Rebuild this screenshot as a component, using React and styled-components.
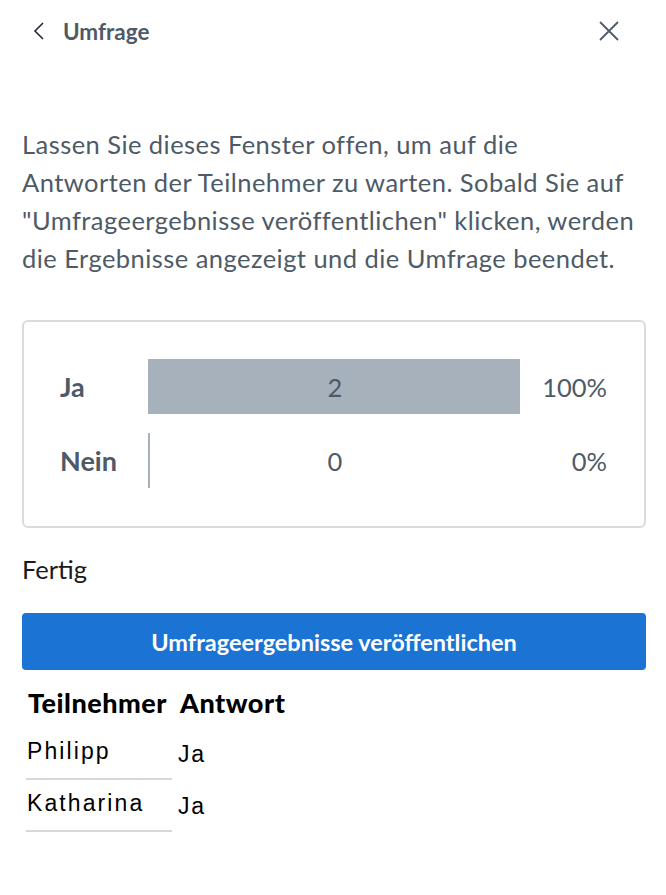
import React from "react";
import styled, { createGlobalStyle } from "styled-components";

const GlobalStyle = createGlobalStyle`
  body {
    margin: 0;
    background: #ffffff;
    font-family: "Lato", "Noto Sans", sans-serif;
    color: #4e5a66;
  }
`;

const Panel = styled.div`
  box-sizing: border-box;
  width: 666px;
  min-height: 895px;
  padding: 0 20px 0 22px;
`;

const Header = styled.div`
  display: flex;
  align-items: center;
  height: 62px;
`;

const BackButton = styled.button`
  display: flex;
  align-items: center;
  gap: 17px;
  border: none;
  background: none;
  padding: 0 0 0 10px;
  font-family: inherit;
  font-size: 22.5px;
  font-weight: 700;
  color: #4e5a66;
`;

const CloseButton = styled.button`
  margin-left: auto;
  margin-right: 26px;
  display: flex;
  border: none;
  background: none;
  padding: 0;
`;

const Intro = styled.p`
  margin: 63px 0 0;
  font-size: 25.5px;
  line-height: 38px;
  letter-spacing: 0.45px;
  white-space: nowrap;
  color: #4e5a66;
`;

const ResultCard = styled.div`
  margin-top: 43px;
  border: 2px solid #d8dce1;
  border-radius: 6px;
  padding: 37px 37px 38px 36px;
  display: flex;
  flex-direction: column;
  gap: 19px;
`;

const ResultRow = styled.div`
  display: grid;
  grid-template-columns: 88px 372px 1fr;
  align-items: center;
  height: 55px;
`;

const OptionLabel = styled.div`
  font-size: 27px;
  font-weight: 700;
  color: #4e5a66;
`;

const BarTrack = styled.div`
  position: relative;
  height: 100%;
  display: flex;
  align-items: center;
  justify-content: center;
  border-left: 2px solid #a7b1bb;
  box-sizing: border-box;
`;

const BarFill = styled.div`
  position: absolute;
  left: -2px;
  top: 0;
  bottom: 0;
  background: #a7b1bb;
`;

const Count = styled.span`
  position: relative;
  font-size: 25.5px;
  color: #4e5a66;
`;

const Percent = styled.div`
  text-align: right;
  font-size: 25.5px;
  color: #4e5a66;
`;

const Status = styled.div`
  margin-top: 26px;
  font-size: 25.5px;
  line-height: 30px;
  color: #1a1a1a;
`;

const PublishButton = styled.button`
  display: block;
  width: 100%;
  height: 57px;
  margin-top: 29px;
  border: none;
  border-radius: 4px;
  background: #1b73d3;
  color: #ffffff;
  font-family: inherit;
  font-size: 23.5px;
  font-weight: 700;
`;

const AnswerTable = styled.table`
  margin-top: 14px;
  border-collapse: separate;
  border-spacing: 6px 0;
  margin-left: -2px;
`;

const HeadCell = styled.th`
  text-align: left;
  font-size: 27px;
  font-weight: 900;
  letter-spacing: 0.5px;
  color: #000000;
  padding: 2px 0 9px 2px;
`;

const NameCell = styled.td`
  box-sizing: border-box;
  width: 146px;
  font-family: "Liberation Sans", Arial, sans-serif;
  font-size: 23px;
  letter-spacing: 2.1px;
  color: #000000;
  height: 52px;
  padding: 0 0 4px 1px;
  border-bottom: 2px solid #d5d9de;
`;

const AnswerCell = styled.td`
  font-family: "Liberation Sans", Arial, sans-serif;
  font-size: 23px;
  letter-spacing: 1.8px;
  color: #000000;
  height: 52px;
  padding: 0;
`;

const results = [
  { label: "Ja", count: 2, percent: 100 },
  { label: "Nein", count: 0, percent: 0 },
];

const answers = [
  { name: "Philipp", answer: "Ja" },
  { name: "Katharina", answer: "Ja" },
];

function App() {
  return (
    <>
      <GlobalStyle />
      <Panel>
        <Header>
          <BackButton>
            <svg width="14" height="20" viewBox="0 0 14 20" fill="none">
              <path d="M11 2 L3 10 L11 18" stroke="#1f2937" strokeWidth="1.6" />
            </svg>
            Umfrage
          </BackButton>
          <CloseButton>
            <svg width="22" height="22" viewBox="0 0 22 22" fill="none">
              <path d="M2 2 L20 20 M20 2 L2 20" stroke="#4e5a66" strokeWidth="1.8" />
            </svg>
          </CloseButton>
        </Header>

        <Intro>
          Lassen Sie dieses Fenster offen, um auf die
          <br />
          Antworten der Teilnehmer zu warten. Sobald Sie auf
          <br />
          "Umfrageergebnisse veröffentlichen" klicken, werden
          <br />
          die Ergebnisse angezeigt und die Umfrage beendet.
        </Intro>

        <ResultCard>
          {results.map((r) => (
            <ResultRow key={r.label}>
              <OptionLabel>{r.label}</OptionLabel>
              <BarTrack>
                <BarFill style={{ width: `calc(${r.percent}% + 2px)` }} />
                <Count>{r.count}</Count>
              </BarTrack>
              <Percent>{r.percent}%</Percent>
            </ResultRow>
          ))}
        </ResultCard>

        <Status>Fertig</Status>

        <PublishButton>Umfrageergebnisse veröffentlichen</PublishButton>

        <AnswerTable>
          <thead>
            <tr>
              <HeadCell>Teilnehmer</HeadCell>
              <HeadCell>Antwort</HeadCell>
            </tr>
          </thead>
          <tbody>
            {answers.map((a) => (
              <tr key={a.name}>
                <NameCell>{a.name}</NameCell>
                <AnswerCell>{a.answer}</AnswerCell>
              </tr>
            ))}
          </tbody>
        </AnswerTable>
      </Panel>
    </>
  );
}

export default App;
